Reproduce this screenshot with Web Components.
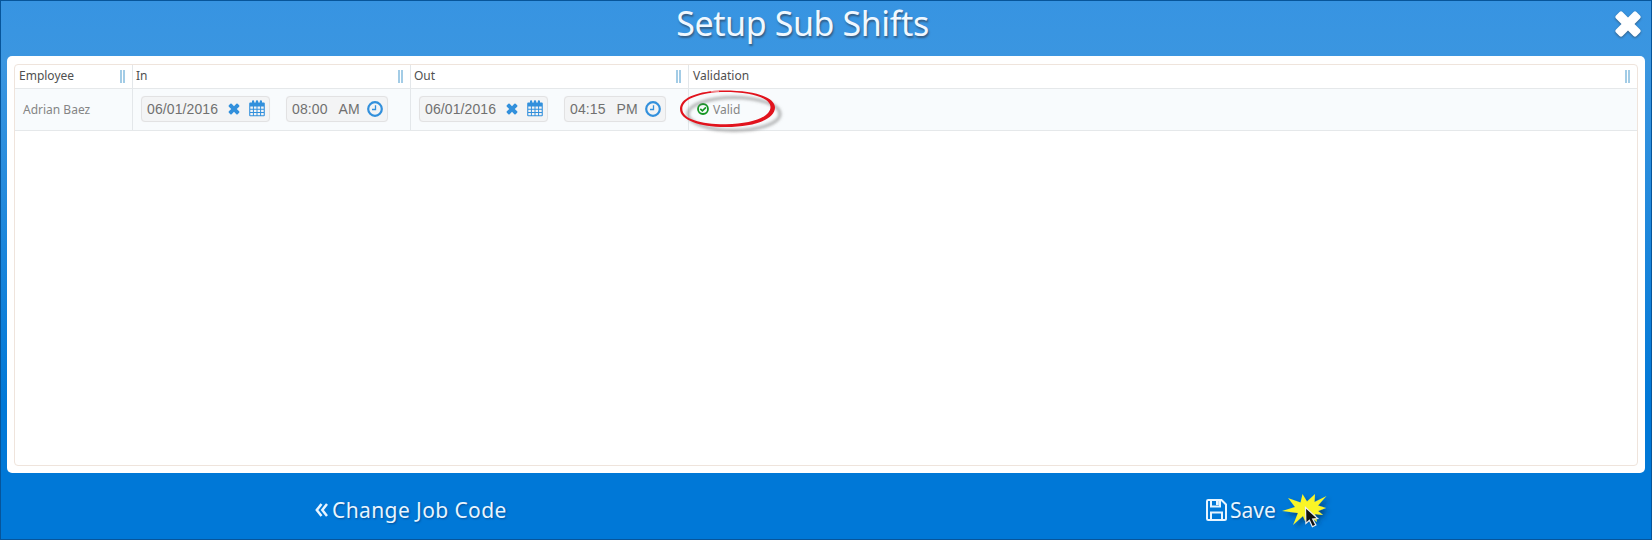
<!DOCTYPE html>
<html lang="en"><head><meta charset="utf-8"><title>Setup Sub Shifts</title>
<style>html,body{margin:0;height:100%;overflow:hidden}body{font-family:"Noto Sans","Open Sans",sans-serif}</style></head>
<body><shift-dialog></shift-dialog>
<script>
const define=(name,html)=>customElements.define(name,class extends HTMLElement{
  constructor(){super();const t=document.createElement('template');t.innerHTML=html;this.attachShadow({mode:'open'}).append(t.content.cloneNode(true));}
});

define('icon-close',`<style>:host{display:block;line-height:0}svg{width:100%;height:100%}</style>
<svg viewBox="0 0 28 28"><path d="M8.500 2 14 7.500 19.500 2q1.500-1.400 3 0L26 5.500q1.400 1.500 0 3L20.500 14l5.500 5.500q1.400 1.500 0 3L22.500 26q-1.500 1.400-3 0L14 20.500 8.500 26q-1.500 1.400-3 0L2 22.500q-1.400-1.500 0-3L7.500 14 2 8.500q-1.400-1.500 0-3L5.500 2q1.500-1.400 3 0Z" fill="currentColor"/></svg>`);

define('icon-calendar',`<style>:host{display:block;width:16px;height:17px}svg{display:block}</style>
<svg width="16" height="17" viewBox="0 0 16 17" fill="currentColor"><path fill-rule="evenodd" d="M1.200 2.500H3V1.300Q3 .2 4.100.2t1.100 1.100v1.200h1.600V1.300Q6.800.2 8 .2t1.200 1.100v1.200h1.600V1.300q0-1.100 1.100-1.100T13 1.300v1.200h1.800q1 0 1 1v11.800q0 1-1 1H1.200q-1 0-1-1V3.500q0-1 1-1ZM1.300 6.500v2.200h2.600V6.500Zm3.600 0v2.200h2.600V6.500Zm3.600 0v2.200h2.600V6.500Zm3.600 0v2.200h2.600V6.500ZM1.300 9.700v2.200h2.600V9.700Zm3.600 0v2.200h2.600V9.700Zm3.600 0v2.200h2.600V9.700Zm3.600 0v2.200h2.600V9.700ZM1.300 12.900v2.300h2.600v-2.300Zm3.600 0v2.300h2.600v-2.300Zm3.600 0v2.300h2.600v-2.300Zm3.600 0v2.300h2.600v-2.300Z"/></svg>`);

define('icon-clock',`<style>:host{display:block;width:16px;height:16px}svg{display:block}</style>
<svg width="16" height="16" viewBox="0 0 16 16" fill="none" stroke="currentColor"><circle cx="8" cy="8" r="6.800" stroke-width="2.200"/><path d="M8.500 4.300v4.200H5" stroke-width="1.300"/></svg>`);

define('icon-check',`<style>:host{display:block;width:12px;height:12px;color:#149622}svg{display:block}</style>
<svg width="12" height="12" viewBox="0 0 12 12" fill="none" stroke="currentColor"><circle cx="6" cy="6" r="5" stroke-width="1.800"/><path d="m3.300 5.900 2.100 2 3.500-3.500" stroke-width="1.700"/></svg>`);

define('icon-back',`<style>:host{display:block;width:13px;height:14px}svg{display:block}</style>
<svg width="13" height="14" viewBox="0 0 13 14" fill="none" stroke="currentColor" stroke-width="2.500"><path d="M6.500 1 1.800 7l4.700 6M12 1 7.300 7l4.700 6"/></svg>`);

define('icon-save',`<style>:host{display:block;width:21px;height:22px}svg{display:block}</style>
<svg width="21" height="22" viewBox="0 0 21 22" fill="none" stroke="currentColor" stroke-width="2"><path d="M2.200 1h13.300L20 5.500v14q0 1.500-1.500 1.500H2.200Q1 21 1 19.700V2.300Q1 1 2.200 1ZM5 1v6.500h9V1M5 21v-7.500h11V21"/><path d="M10 2h2.800v4H10Z" fill="currentColor" stroke="none"/></svg>`);

define('field-box',`<style>:host{display:flex;align-items:center;box-sizing:border-box;height:26px;border:1px solid #e2e2e3;border-radius:4px;background:#f3f4f5;padding:0 4px 1px 5px;font:14px "Liberation Sans",sans-serif;color:#707070;white-space:nowrap;letter-spacing:.1px;box-shadow:0 0 1px #eee}</style><slot></slot>`);

define('date-field',`<style>:host{display:block;width:129px}icon-close{width:12px;height:12px;margin:1px 0 0 10px}icon-calendar{margin-left:auto}.i{color:#3290dc}</style>
<field-box><slot></slot><icon-close class="i"></icon-close><icon-calendar class="i"></icon-calendar></field-box>`);

define('time-field',`<style>:host{display:block;width:102px}icon-clock{margin-left:auto;color:#3290dc}::slotted(span){margin-right:11px}::slotted(span:last-child){margin-right:0}</style>
<field-box><slot></slot><icon-clock></icon-clock></field-box>`);

define('head-cell',`<style>:host{display:flex;box-sizing:border-box;align-items:center;justify-content:space-between;padding:0 7px 2px 3px;border-right:1px solid #e3e7ea;font-size:12px;color:#505050;height:23px}:host([first]){padding-left:4px}:host([last]){border-right:0;padding-left:4px}i{display:block;width:1px;height:13px;border:solid #a3cce6;border-width:0 2px;margin-top:1px}</style>
<slot></slot><i></i>`);

define('body-cell',`<style>:host{display:flex;box-sizing:border-box;align-items:center;gap:16px;padding:0 8px 1px;border-right:1px solid #e3e7ea;height:41px;font-size:12px;color:#858585}:host([last]){border-right:0}</style><slot></slot>`);

define('red-ring',`<style>:host{position:absolute;left:-20px;top:0;width:106px;height:48px;pointer-events:none}svg{display:block;overflow:visible}</style>
<svg width="106" height="48" viewBox="0 0 106 48"><defs><filter id="b" x="-20%" y="-30%" width="150%" height="170%"><feGaussianBlur stdDeviation="1.800"/></filter></defs>
<ellipse cx="53" cy="21" rx="46" ry="16.500" fill="none" stroke="#777" stroke-opacity=".55" stroke-width="3" filter="url(#b)" transform="translate(4 4)"/>
<path fill="#e1131d" fill-rule="evenodd" d="M42 1.500C17 3 3 10 3 20c0 11 20 18.200 46 18 28-.2 49-7.500 49-19.500C98 8 77 .7 42 1.500ZM44 3C74 2.500 93.500 9 93.500 18c0 10-18.500 17-44.500 17.300C24 35.500 5.300 30 5.300 20 5.300 11 19 4.500 44 3Z"/><path d="M34 2.500h8" stroke="#fff" stroke-width="2" opacity=".5"/></svg>`);

define('valid-status',`<style>:host{display:flex;align-items:center;gap:4px;position:relative;height:41px;font-size:12px}</style><icon-check></icon-check><slot></slot><red-ring></red-ring>`);

define('shift-grid',`<style>:host{display:block;box-sizing:border-box;height:402px;border:1px solid #efe4dc;border-radius:4px;background:#fff}
.r{display:grid;grid-template-columns:118px 278px 278px 1fr;border-bottom:1px solid #e5e8ea}.d{background:#f8fbfd}.v,.n{padding-left:8px}</style>
<div class="r"><head-cell first>Employee</head-cell><head-cell>In</head-cell><head-cell>Out</head-cell><head-cell last>Validation</head-cell></div>
<div class="r d"><body-cell class="n">Adrian Baez</body-cell>
<body-cell><date-field>06/01/2016</date-field><time-field><span>08:00</span><span>AM</span></time-field></body-cell>
<body-cell><date-field>06/01/2016</date-field><time-field><span>04:15</span><span>PM</span></time-field></body-cell>
<body-cell last class="v"><valid-status>Valid</valid-status></body-cell></div>`);

define('click-burst',`<style>:host{display:block;width:50px;height:42px}svg{display:block;overflow:visible}</style>
<svg width="50" height="42" viewBox="0 0 50 42"><defs><filter id="s" x="-30%" y="-30%" width="170%" height="170%"><feDropShadow dx="3" dy="3" stdDeviation="2" flood-color="#002952" flood-opacity=".6"/></filter></defs>
<path filter="url(#s)" d="M18.500 8.500 20.500 0l4.500 7.500L33 0l-.5 8L44.500 2 36 11.500l8 2.500-8 3 5 4-8-1 2 8-8-6-4 5-2-5-10 9 5-12-16-2 13-4L6 4Z" fill="#faf528"/><path d="m23.500 13.500.4 16 3.500-3.200 3 6.500 3.500-1.700-3.200-6.100 5-.5Z" fill="#111" stroke="#eee" stroke-width="1.200"/></svg>`);

define('dialog-action',`<style>:host{display:flex;align-items:center;font-size:21px;line-height:28px;color:#e8f5ff;white-space:nowrap;text-shadow:1px 1px 2px #00509a}</style><slot name="icon"></slot><slot></slot>`);

define('shift-dialog',`<style>:host{display:flex;flex-direction:column;box-sizing:border-box;width:1652px;height:540px;padding:0 6px;border:1px solid #07559a;background:linear-gradient(#3794e2 0,#3b96e0 60px,#0078d7 405px,#0078d7 100%)}
header{height:55px;display:grid;grid-template-columns:1fr auto 1fr;align-items:start}h1{grid-column:2;margin:0 47px 0 0;font-size:34px;font-weight:400;line-height:45px;color:#f0f8ff;letter-spacing:-.4px;text-shadow:1px 2px 2px #345c83;white-space:nowrap}
.x{width:28px;height:28px;justify-self:end;margin:9px 3px 0 0;color:#fff;filter:drop-shadow(0 1px 1px #315b80)}
main{box-sizing:border-box;height:417px;background:#fff;border-radius:5px;padding:8px 7px}
footer{display:grid;grid-template-columns:1199px 1fr;height:66px;padding-top:8px;box-sizing:border-box;align-items:center}
.back{padding-left:308px;gap:4px;letter-spacing:.4px}.save{gap:3px}.burst{margin:9px 0 0 6px}.sv{display:flex;align-items:center;height:42px}</style>
<header><h1>Setup Sub Shifts</h1><icon-close class="x"></icon-close></header>
<main><shift-grid></shift-grid></main>
<footer><dialog-action class="back"><icon-back slot="icon"></icon-back>Change Job Code</dialog-action>
<div class="sv"><dialog-action class="save"><icon-save slot="icon"></icon-save>Save</dialog-action><click-burst class="burst"></click-burst></div></footer>`);
</script></body></html>
